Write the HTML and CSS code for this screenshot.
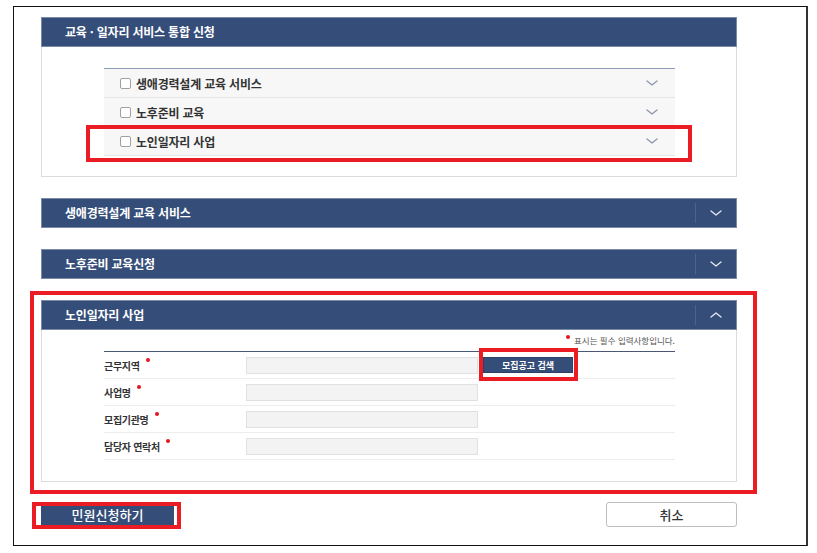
FILE: index.html
```html
<!DOCTYPE html>
<html lang="ko">
<head>
<meta charset="utf-8">
<title>교육 · 일자리 서비스 통합 신청</title>
<link rel="stylesheet" href="styles.css">
</head>
<body>
<div class="frame">
  <section class="panel">
    <div class="panel-head">
      <h2 class="panel-title">교육 · 일자리 서비스 통합 신청</h2>
    </div>
    <div class="panel-body body-list">
      <ul class="svc-list">
        <li class="svc-row">
          <label class="svc-label"><span class="check"></span>생애경력설계 교육 서비스</label>
          <svg class="chev chev-gray" viewBox="0 0 12 6" width="12" height="6"><polyline points="1,1 6,5 11,1"/></svg>
        </li>
        <li class="svc-row">
          <label class="svc-label"><span class="check"></span>노후준비 교육</label>
          <svg class="chev chev-gray" viewBox="0 0 12 6" width="12" height="6"><polyline points="1,1 6,5 11,1"/></svg>
        </li>
        <li class="svc-row">
          <label class="svc-label"><span class="check"></span>노인일자리 사업</label>
          <svg class="chev chev-gray" viewBox="0 0 12 6" width="12" height="6"><polyline points="1,1 6,5 11,1"/></svg>
          <span class="mark mark-row"></span>
        </li>
      </ul>
    </div>
  </section>

  <section class="panel">
    <div class="panel-head">
      <h2 class="panel-title">생애경력설계 교육 서비스</h2>
      <span class="toggle"><svg class="chev chev-light" viewBox="0 0 12 6" width="12" height="6"><polyline points="1,1 6,5 11,1"/></svg></span>
    </div>
  </section>

  <section class="panel">
    <div class="panel-head">
      <h2 class="panel-title">노후준비 교육신청</h2>
      <span class="toggle"><svg class="chev chev-light" viewBox="0 0 12 6" width="12" height="6"><polyline points="1,1 6,5 11,1"/></svg></span>
    </div>
  </section>

  <section class="panel">
    <div class="panel-head">
      <h2 class="panel-title">노인일자리 사업</h2>
      <span class="toggle"><svg class="chev chev-light" viewBox="0 0 12 6" width="12" height="6"><polyline points="1,5 6,1 11,5"/></svg></span>
    </div>
    <div class="panel-body body-form">
      <p class="note"><span class="note-dot"></span>표시는 필수 입력사항입니다.</p>
      <div class="form-table">
        <div class="form-row">
          <span class="form-label">근무지역<span class="req"></span></span>
          <span class="field"></span>
          <button class="btn-search" type="button">모집공고 검색<span class="mark mark-search"></span></button>
        </div>
        <div class="form-row">
          <span class="form-label">사업명<span class="req"></span></span>
          <span class="field"></span>
        </div>
        <div class="form-row">
          <span class="form-label">모집기관명<span class="req"></span></span>
          <span class="field"></span>
        </div>
        <div class="form-row">
          <span class="form-label">담당자 연락처<span class="req"></span></span>
          <span class="field"></span>
        </div>
      </div>
    </div>
    <span class="mark mark-panel"></span>
  </section>

  <div class="actions">
    <button class="btn-submit" type="button">민원신청하기<span class="mark mark-submit"></span></button>
    <button class="btn-cancel" type="button">취소</button>
  </div>
</div>
</body>
</html>
```

FILE: styles.css
```css
html, body {
  margin: 0;
  background: #fff;
}
body {
  font-family: "Noto Sans CJK KR", "Noto Sans", sans-serif;
  color: #333;
}
.frame {
  box-sizing: border-box;
  width: 795px;
  height: 540px;
  margin: 6px 0 0 13px;
  border: 1px solid #111;
  border-right: 2px solid #333;
  padding: 10px 69px 0 27px;
}
.panel {
  position: relative;
}
.panel + .panel {
  margin-top: 21px;
}
.panel-head {
  box-sizing: border-box;
  height: 30px;
  background: #354e79;
  border: 1px solid #7a89a6;
  display: flex;
  align-items: center;
  padding-left: 23px;
}
.panel-title {
  flex: 1;
  margin: 0;
  font-size: 12px;
  font-weight: 700;
  line-height: 1;
  color: #fff;
  letter-spacing: -0.2px;
}
.toggle {
  box-sizing: border-box;
  width: 41px;
  height: 20px;
  border-left: 1px solid #4c6390;
  display: flex;
  align-items: center;
  justify-content: center;
}
.chev {
  display: block;
  fill: none;
  stroke-width: 1.3;
  stroke-linecap: round;
  stroke-linejoin: round;
}
.chev-gray {
  stroke: #8c96aa;
}
.chev-light {
  stroke: #e6ebf3;
}
.panel-body {
  border: 1px solid #dcdcdc;
  border-top: 0;
}
.body-list {
  padding: 21px 61px 20px 62px;
}
.svc-list {
  list-style: none;
  margin: 0;
  padding: 0;
  border-top: 1px solid #8d9cb8;
}
.svc-row {
  position: relative;
  box-sizing: border-box;
  height: 29px;
  background: #f7f7f7;
  border-bottom: 1px solid #e6e6e6;
  display: flex;
  align-items: center;
  padding: 0 17px 0 16px;
}
.svc-label {
  flex: 1;
  display: flex;
  align-items: center;
  gap: 5px;
  font-size: 12px;
  font-weight: 700;
  color: #333;
  letter-spacing: -0.2px;
}
.check {
  box-sizing: border-box;
  width: 11px;
  height: 11px;
  border: 1px solid #a0a0a0;
  border-radius: 2px;
  background: #fff;
}
.body-form {
  padding: 3px 61px 21px 62px;
}
.note {
  margin: 0 0 4px;
  text-align: right;
  font-size: 8.5px;
  line-height: 14px;
  color: #555;
}
.note-dot,
.req {
  display: inline-block;
  width: 4px;
  height: 4px;
  border-radius: 50%;
  background: #e4151f;
}
.note-dot {
  margin-right: 4px;
  vertical-align: 5px;
}
.req {
  margin-left: 6px;
  vertical-align: 8px;
}
.form-table {
  border-top: 1px solid #4a5876;
}
.form-row {
  box-sizing: border-box;
  height: 27px;
  border-bottom: 1px solid #ededed;
  display: flex;
  align-items: center;
}
.form-label {
  width: 142px;
  font-size: 10px;
  font-weight: 700;
  color: #333;
  letter-spacing: -0.3px;
}
.field {
  box-sizing: border-box;
  width: 232px;
  height: 17px;
  background: #f3f3f3;
  border: 1px solid #e1e1e1;
}
.btn-search {
  position: relative;
  box-sizing: border-box;
  margin-left: 5px;
  width: 90px;
  height: 16px;
  padding: 0;
  border: 1px solid #2c4168;
  background: #354e79;
  color: #fff;
  font-family: inherit;
  font-size: 9px;
  font-weight: 700;
  line-height: 1;
}
.actions {
  display: flex;
  justify-content: space-between;
  margin-top: 20px;
}
.btn-submit {
  position: relative;
  box-sizing: border-box;
  width: 133px;
  height: 25px;
  padding: 0;
  border: 0;
  background: #354e79;
  color: #fff;
  font-family: inherit;
  font-size: 13px;
  font-weight: 500;
}
.btn-cancel {
  box-sizing: border-box;
  width: 131px;
  height: 25px;
  padding: 0;
  border: 1px solid #bdbdbd;
  border-radius: 3px;
  background: #fff;
  color: #333;
  font-family: inherit;
  font-size: 13px;
  font-weight: 500;
}
.mark {
  position: absolute;
  border: 4px solid #ec1c24;
  pointer-events: none;
}
.mark-row {
  top: -2px;
  left: -18px;
  right: -17px;
  bottom: -7px;
}
.mark-panel {
  top: -9px;
  left: -11px;
  right: -20px;
  bottom: -12px;
}
.mark-search {
  top: -10px;
  left: -5px;
  right: -6px;
  bottom: -9px;
}
.mark-submit {
  top: 0;
  left: -9px;
  right: -7px;
  bottom: -2px;
}
```
